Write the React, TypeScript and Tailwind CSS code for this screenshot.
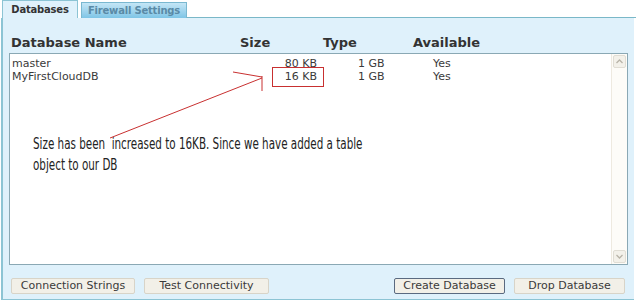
import React from "react";

const font = { fontFamily: "Verdana, 'DejaVu Sans', sans-serif" };

function Btn({ label, w, active }: { label: string; w: string; active?: boolean }) {
  return (
    <div
      className={`${w} h-[16px] flex items-center justify-center text-[11px] text-[#3a3a3a] bg-[#f2f0e8] rounded-[2px] whitespace-nowrap ${
        active ? "border border-[#5a6a80]" : "border border-[#d8d4c8]"
      }`}
    >
      {label}
    </div>
  );
}

export default function App() {
  return (
    <div className="w-[636px] h-[304px] bg-white relative overflow-hidden" style={font}>
      {/* tabs */}
      <div className="flex items-end h-[18px] pl-[2px]">
        <div className="w-[76px] h-[18px] bg-[#dff1fb] border border-b-0 border-[#8cc4d4] flex items-center justify-center text-[10px] tracking-[-0.2px] font-bold text-[#333] whitespace-nowrap">
          Databases
        </div>
        <div className="ml-[3px] w-[106px] h-[16px] bg-gradient-to-b from-[#c4e6f6] to-[#7ec5e6] border border-b-0 border-[#7ab8d0] flex items-center justify-center text-[10px] tracking-[-0.2px] font-bold text-[#5a8aa6] whitespace-nowrap">
          Firewall Settings
        </div>
        <div className="flex-1 border-b border-[#7ab8c8]" />
      </div>
      {/* panel */}
      <div className="ml-[1px] mr-[2px] h-[282px] bg-[#dff1fb] border-l-2 border-b border-[#8cc4d4] flex flex-col px-[6px]">
        <div className="h-[35px] flex items-end pb-[1px] text-[13px] font-bold text-[#333] relative">
          <span className="ml-[2px]">Database Name</span>
          <span className="absolute left-[231px] bottom-[1px]">Size</span>
          <span className="absolute left-[314px] bottom-[1px]">Type</span>
          <span className="absolute left-[404px] bottom-[1px]">Available</span>
        </div>
        <div className="h-[212px] bg-white border border-[#8aa8b4] flex relative">
          <div className="flex-1 text-[11px] leading-[13px] text-[#3a3a3a] pt-[3px] pl-[2px]">
            <div className="flex">
              <span className="w-[200px]">master</span>
              <span className="w-[105px] text-right">80 KB</span>
              <span className="w-[40px] ml-[41px]">1 GB</span>
              <span className="ml-[35px]">Yes</span>
            </div>
            <div className="flex">
              <span className="w-[200px]">MyFirstCloudDB</span>
              <span className="w-[105px] text-right">16 KB</span>
              <span className="w-[40px] ml-[41px]">1 GB</span>
              <span className="ml-[35px]">Yes</span>
            </div>
            <div
              className="mt-[50px] ml-[21px] text-[16px] leading-[21px] text-[#222] whitespace-nowrap"
              style={{ fontFamily: "'DejaVu Sans Condensed', 'Liberation Sans Narrow', 'Liberation Sans', sans-serif", transform: "scaleX(0.72)", transformOrigin: "left" }}
            >
              <div>Size has been &nbsp;increased to 16KB. Since we have added a table</div>
              <div>object to our DB</div>
            </div>
          </div>
          {/* scrollbar */}
          <div className="w-[16px] border-l border-[#eeeae0] bg-[#fdfcf8] flex flex-col justify-between py-[1px] items-center">
            <div className="w-[13px] h-[13px] bg-[#f3f1ea] border border-[#e0ddd4] rounded-[2px] flex items-center justify-center">
              <svg width="7" height="5" viewBox="0 0 7 5"><path d="M0.5 4 L3.5 1 L6.5 4" stroke="#b8b4a8" strokeWidth="1.3" fill="none" /></svg>
            </div>
            <div className="w-[13px] h-[13px] bg-[#f3f1ea] border border-[#e0ddd4] rounded-[2px] flex items-center justify-center">
              <svg width="7" height="5" viewBox="0 0 7 5"><path d="M0.5 1 L3.5 4 L6.5 1" stroke="#b8b4a8" strokeWidth="1.3" fill="none" /></svg>
            </div>
          </div>
        </div>
        <div className="flex items-center mt-[13px] ml-[2px]">
          <Btn label="Connection Strings" w="w-[124px]" />
          <div className="w-[9px]" />
          <Btn label="Test Connectivity" w="w-[125px]" />
          <div className="flex-1" />
          <Btn label="Create Database" w="w-[111px]" active />
          <div className="w-[9px]" />
          <Btn label="Drop Database" w="w-[111px]" />
          <div className="w-[3px]" />
        </div>
      </div>
      {/* annotations */}
      <div className="absolute left-[272px] top-[67px] w-[52px] h-[20px] border border-[#c83030]" />
      <svg className="absolute left-0 top-0" width="636" height="304" viewBox="0 0 636 304">
        <path d="M233 72 L262 77" stroke="#c83030" strokeWidth="1" fill="none" />
        <path d="M262 76 L262 91" stroke="#c83030" strokeWidth="1" fill="none" />
        <path d="M110 138 L262 78" stroke="#c83030" strokeWidth="1" fill="none" />
      </svg>
    </div>
  );
}
